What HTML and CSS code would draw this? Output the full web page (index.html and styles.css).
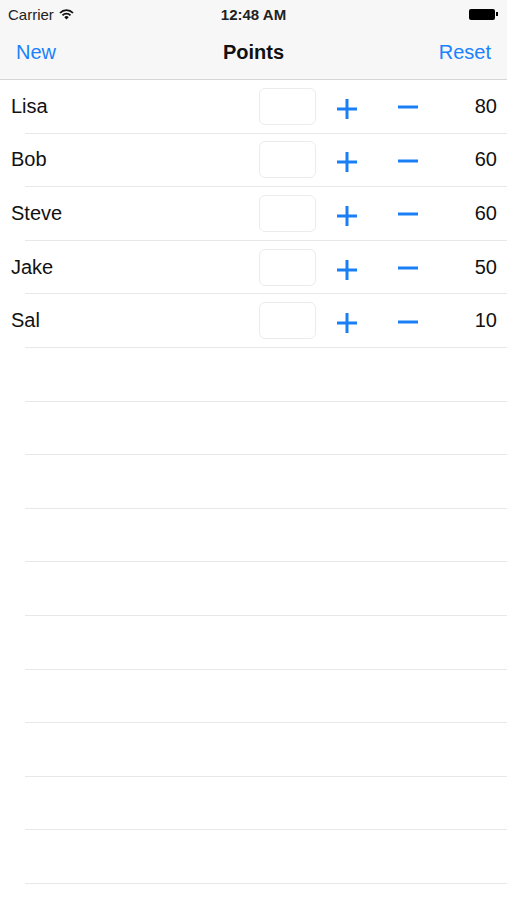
FILE: index.html
```html
<!DOCTYPE html>
<html lang="en">
<head>
  <meta charset="UTF-8">
  <meta name="viewport" content="width=device-width, initial-scale=1.0">
  <title>Points</title>
  <link rel="stylesheet" href="styles.css">
</head>
<body>

  <header class="barra">
    <div class="estado">
      <div class="operador">
        <span>Carrier</span>
        <svg width="15" height="11" viewBox="0 0 15 11">
          <path d="M1 4 A9 9 0 0 1 14 4" fill="none" stroke="#111" stroke-width="1.8"/>
          <path d="M3.5 6.3 A5.5 5.5 0 0 1 11.5 6.3" fill="none" stroke="#111" stroke-width="1.8"/>
          <path d="M5.3 8.3 L7.5 10.6 L9.7 8.3 A3 3 0 0 0 5.3 8.3 Z" fill="#111"/>
        </svg>
      </div>
      <div class="hora">12:48 AM</div>
      <div class="bateria"><span class="pila"></span><span class="punta"></span></div>
    </div>
    <nav class="nav">
      <a class="nav-btn">New</a>
      <h1>Points</h1>
      <a class="nav-btn">Reset</a>
    </nav>
  </header>

  <main class="lista">
    <div class="fila">
      <span class="nombre">Lisa</span>
      <input class="campo" type="text">
      <button class="btn-mas"><svg width="20" height="20" viewBox="0 0 20 20"><path d="M10 0V20M0 10H20" stroke="#1a7ff5" stroke-width="3"/></svg></button>
      <button class="btn-menos"><svg width="20" height="4" viewBox="0 0 20 4"><path d="M0 2H20" stroke="#1a7ff5" stroke-width="3"/></svg></button>
      <span class="puntos">80</span>
    </div>
    <div class="fila">
      <span class="nombre">Bob</span>
      <input class="campo" type="text">
      <button class="btn-mas"><svg width="20" height="20" viewBox="0 0 20 20"><path d="M10 0V20M0 10H20" stroke="#1a7ff5" stroke-width="3"/></svg></button>
      <button class="btn-menos"><svg width="20" height="4" viewBox="0 0 20 4"><path d="M0 2H20" stroke="#1a7ff5" stroke-width="3"/></svg></button>
      <span class="puntos">60</span>
    </div>
    <div class="fila">
      <span class="nombre">Steve</span>
      <input class="campo" type="text">
      <button class="btn-mas"><svg width="20" height="20" viewBox="0 0 20 20"><path d="M10 0V20M0 10H20" stroke="#1a7ff5" stroke-width="3"/></svg></button>
      <button class="btn-menos"><svg width="20" height="4" viewBox="0 0 20 4"><path d="M0 2H20" stroke="#1a7ff5" stroke-width="3"/></svg></button>
      <span class="puntos">60</span>
    </div>
    <div class="fila">
      <span class="nombre">Jake</span>
      <input class="campo" type="text">
      <button class="btn-mas"><svg width="20" height="20" viewBox="0 0 20 20"><path d="M10 0V20M0 10H20" stroke="#1a7ff5" stroke-width="3"/></svg></button>
      <button class="btn-menos"><svg width="20" height="4" viewBox="0 0 20 4"><path d="M0 2H20" stroke="#1a7ff5" stroke-width="3"/></svg></button>
      <span class="puntos">50</span>
    </div>
    <div class="fila">
      <span class="nombre">Sal</span>
      <input class="campo" type="text">
      <button class="btn-mas"><svg width="20" height="20" viewBox="0 0 20 20"><path d="M10 0V20M0 10H20" stroke="#1a7ff5" stroke-width="3"/></svg></button>
      <button class="btn-menos"><svg width="20" height="4" viewBox="0 0 20 4"><path d="M0 2H20" stroke="#1a7ff5" stroke-width="3"/></svg></button>
      <span class="puntos">10</span>
    </div>
    <div class="fila vacia"></div>
    <div class="fila vacia"></div>
    <div class="fila vacia"></div>
    <div class="fila vacia"></div>
    <div class="fila vacia"></div>
    <div class="fila vacia"></div>
    <div class="fila vacia"></div>
    <div class="fila vacia"></div>
    <div class="fila vacia"></div>
    <div class="fila vacia"></div>
  </main>

</body>
</html>
```

FILE: styles.css
```css
body {
  font-family: "Liberation Sans", Arial, sans-serif;
  margin: 0;
  padding: 0;
  background-color: white;
  color: #111;
}
.barra {
  background-color: #f7f7f7;
  border-bottom: 1px solid #d6d6d6;
}
.estado {
  height: 28px;
  display: flex;
  align-items: center;
  justify-content: space-between;
  padding: 0 8px 0 8px;
  font-size: 15px;
}
.operador {
  display: flex;
  align-items: center;
  gap: 5px;
  width: 120px;
  color: #222;
}
.hora {
  font-weight: bold;
  color: #222;
}
.bateria {
  width: 120px;
  display: flex;
  justify-content: flex-end;
  align-items: center;
}
.pila {
  width: 26px;
  height: 11px;
  background-color: black;
  border-radius: 2px;
}
.punta {
  width: 2px;
  height: 4px;
  background-color: black;
  margin-left: 1px;
  margin-right: 1px;
}
.nav {
  height: 51px;
  box-sizing: border-box;
  display: flex;
  align-items: center;
  justify-content: space-between;
  padding: 0 16px 2px 16px;
}
.nav h1 {
  font-size: 20px;
  margin: 0;
  font-weight: bold;
}
.nav-btn {
  color: #1a82fb;
  font-size: 20px;
  width: 60px;
}
.nav-btn:last-child {
  text-align: right;
}
.fila {
  height: 53.6px;
  box-sizing: border-box;
  margin-left: 25px;
  border-bottom: 1px solid #e8e8e8;
  display: flex;
  align-items: center;
}
.nombre {
  flex: 1;
  margin-left: -14px;
  font-size: 20px;
}
.campo {
  width: 57px;
  height: 37px;
  box-sizing: border-box;
  border: 1px solid #ececec;
  border-radius: 6px;
  margin: 0 11px 0 0;
  padding: 0;
  background: white;
}
.btn-mas, .btn-menos {
  width: 40px;
  height: 40px;
  border: none;
  background: none;
  padding: 0;
  display: flex;
  align-items: center;
  justify-content: center;
  cursor: pointer;
}
.btn-mas {
  margin-top: 5px;
  margin-right: 21px;
}
.btn-menos {
  margin-top: 2px;
}
.puntos {
  width: 69px;
  padding-right: 10px;
  text-align: right;
  font-size: 20px;
}
```
